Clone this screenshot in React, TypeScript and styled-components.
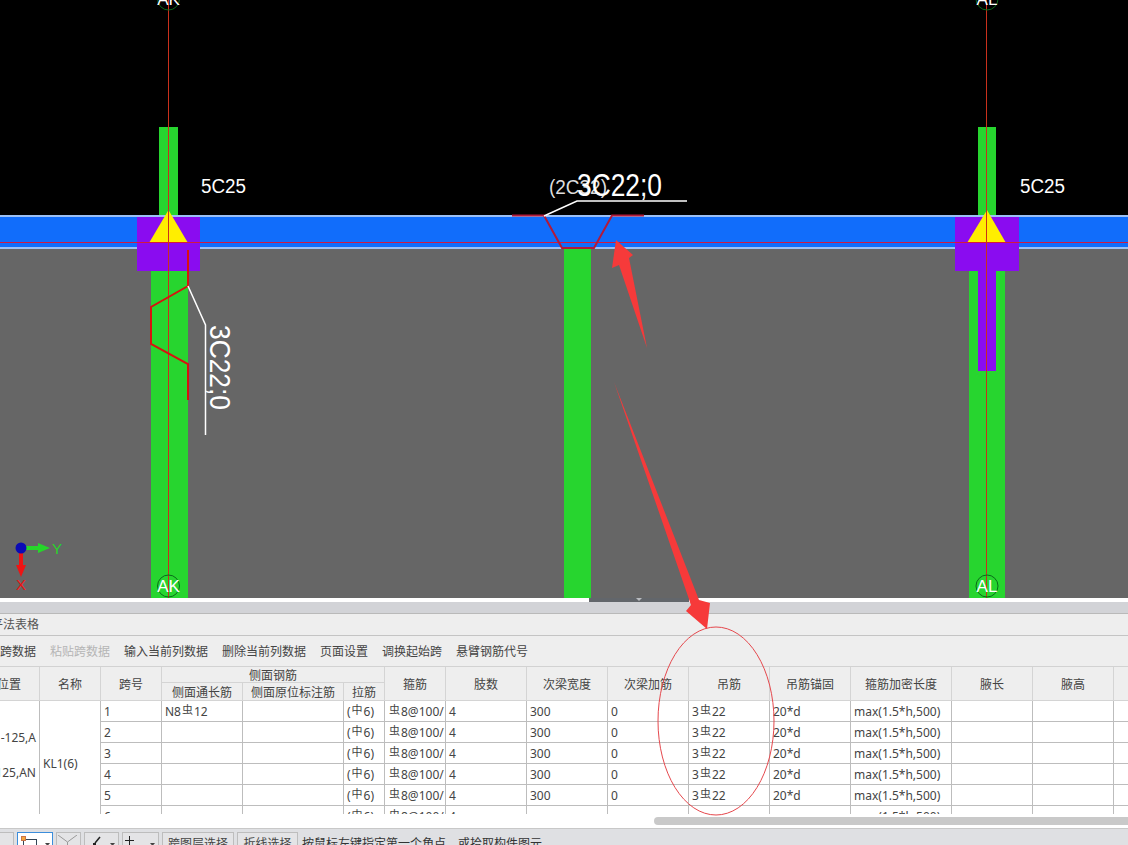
import * as React from 'react'
import styled, { createGlobalStyle } from 'styled-components'

const CJK = `"Noto Sans", "Noto Sans CJK SC", sans-serif`

const GlobalStyle = createGlobalStyle`
  html, body {
    margin: 0;
    height: 845px;
    overflow: hidden;
    background: #fff;
  }
  * {
    box-sizing: border-box;
  }
`

const Page = styled.div`
  position: relative;
  width: 1128px;
  height: 845px;
  overflow: hidden;
  display: flex;
  flex-direction: column;
  font-family: ${CJK};
  font-size: 12px;
  color: #444;
`

const Canvas = styled.svg`
  display: block;
  flex: none;
  width: 1128px;
  height: 598px;
`

const Splitter = styled.div`
  flex: none;
  height: 4px;
  background: #fff;
  display: flex;
  padding-left: 589px;
`

const SplitterHandle = styled.div`
  width: 100px;
  height: 4px;
  background: #62666b;
  display: flex;
  justify-content: center;
  &::after {
    content: '';
    height: 0;
    border-left: 3px solid transparent;
    border-right: 3px solid transparent;
    border-top: 3px solid #b9bcc0;
  }
`

const DockGap = styled.div`
  flex: none;
  height: 12px;
  background: #d2d3d7;
  border-bottom: 1px solid #b9b9b9;
`

const TitleBar = styled.div`
  flex: none;
  height: 22px;
  line-height: 21px;
  background: #eee;
  border-bottom: 1px solid #c4c4c4;
  margin-left: -9px;
  color: #555;
`

const Toolbar = styled.div`
  flex: none;
  height: 30px;
  background: #eee;
  margin-left: -24px;
  display: flex;
  align-items: center;
  gap: 14px;
`

const ToolItem = styled.span<{ $disabled?: boolean }>`
  color: ${(p) => (p.$disabled ? '#b5b5b5' : '#444')};
  white-space: nowrap;
`

const TableClip = styled.div`
  flex: none;
  height: 148px;
  overflow: hidden;
  background: #fff;
`

const Table = styled.div`
  display: grid;
  margin-left: -21px;
  width: max-content;
  grid-template-columns: 61px 61px 61px 81px 101px 41px 61px 81px 81px 81px 81px 81px 101px 81px 81px 81px;
  grid-template-rows: 16px 18px repeat(6, 21px);
  grid-auto-flow: row dense;
  border-top: 1px solid #d2d2d2;
`

const Head = styled.div<{ $rows?: number; $cols?: number }>`
  grid-row: span ${(p) => p.$rows || 1};
  grid-column: span ${(p) => p.$cols || 1};
  background: #eee;
  border-right: 1px solid #d4d4d4;
  border-bottom: 1px solid #d4d4d4;
  padding-top: 1px;
  display: flex;
  align-items: center;
  justify-content: center;
  white-space: nowrap;
  overflow: hidden;
`

const Cell = styled.div<{ $rows?: number }>`
  grid-row: span ${(p) => p.$rows || 1};
  border-right: 1px solid #bdbdbd;
  border-bottom: 1px solid ${(p) => (p.$rows ? 'transparent' : '#bdbdbd')};
  padding: 0 3px;
  display: flex;
  align-items: center;
  white-space: nowrap;
  overflow: hidden;
  color: #444;
`

const PositionCell = styled(Cell)`
  flex-direction: column;
  align-items: flex-end;
  justify-content: flex-start;
  gap: 18px;
  padding: 28px 3px 0 0;
`

const Rebar = styled.span`
  font-size: 11px;
  position: relative;
  top: -2px;
  margin: 0 1px;
  line-height: 1;
`

const ScrollTrack = styled.div`
  flex: none;
  height: 8px;
  margin-top: 3px;
  padding-left: 654px;
  background: #fff;
`

const ScrollThumb = styled.div`
  height: 8px;
  background: #c9c9c9;
  border-radius: 4px 0 0 4px;
`

const StatusBar = styled.div`
  flex: none;
  margin-top: 3px;
  height: 30px;
  background: #dfe0e3;
  border-top: 1px solid #c8c8c8;
  display: flex;
  align-items: flex-start;
  padding-top: 3px;
  gap: 3px;
  margin-left: -4px;
`

const StatusButton = styled.div<{ $active?: boolean; $w: number }>`
  width: ${(p) => p.$w}px;
  height: 24px;
  background: ${(p) => (p.$active ? '#fff' : '#e4e4e6')};
  border: 1px solid ${(p) => (p.$active ? '#3b8ddb' : '#bdbdbd')};
  flex: none;
  display: flex;
  align-items: flex-start;
  justify-content: center;
  padding-top: 1px;
  white-space: nowrap;
  color: #444;
`

const ButtonIcon = styled.svg`
  display: block;
  flex: none;
  margin-top: 1px;
`

const StatusHint = styled.span`
  padding-top: 2px;
  white-space: nowrap;
  margin-left: 1px;
  color: #333;
`

const Annotations = styled.svg`
  position: absolute;
  left: 0;
  top: 0;
  width: 1128px;
  height: 845px;
  pointer-events: none;
`

const canvasFont = '"Liberation Sans", "Noto Sans", sans-serif'

const AxisBubble = ({ x, y, label }: { x: number; y: number; label: string }) => (
  <g>
    <circle cx={x} cy={y} r={11} fill="none" stroke="#0a6b1a" strokeWidth={1} />
    <text x={x} y={y + 6} textAnchor="middle" fill="#fff" fontSize={17} fontFamily={canvasFont}>
      {label}
    </text>
  </g>
)

const Drawing = () => (
  <Canvas viewBox="0 0 1128 598">
    <rect width="1128" height="215" fill="#000" />
    <rect y="215" width="1128" height="383" fill="#666" />
    <rect x="159" y="127" width="19" height="90" fill="#27d52f" />
    <rect x="978" y="127" width="18" height="90" fill="#27d52f" />
    <rect y="215" width="1128" height="2" fill="#9cc0f5" />
    <rect y="217" width="1128" height="30" fill="#116dfb" />
    <rect y="247" width="1128" height="2" fill="#9cc0f5" />

    <rect x="151" y="271" width="37" height="327" fill="#27d52f" />
    <rect x="564" y="249" width="27" height="349" fill="#27d52f" />
    <rect x="969" y="271" width="36" height="327" fill="#27d52f" />
    <rect x="137" y="217" width="63" height="54" fill="#8a0cf0" />
    <rect x="955" y="217" width="64" height="54" fill="#8a0cf0" />
    <rect x="978" y="271" width="18" height="100" fill="#8a0cf0" />

    <polygon points="168.5,210 188,243 149,243" fill="#ffee00" />
    <polygon points="987,210 1006,243 967,243" fill="#ffee00" />

    <line x1="0" y1="242.5" x2="1128" y2="242.5" stroke="#d3193f" strokeWidth={1} />
    <line x1="168.5" y1="0" x2="168.5" y2="598" stroke="#c9301c" strokeWidth={1} />
    <line x1="986.5" y1="0" x2="986.5" y2="598" stroke="#c9301c" strokeWidth={1} />

    <polyline
      points="188,250 188,286 151,307 151,344 188,364 188,400"
      fill="none"
      stroke="#d8120f"
      strokeWidth={2}
    />
    <polyline points="188,286 205.5,325 205.5,435" fill="none" stroke="#fff" strokeWidth={1.5} />
    <text
      transform="translate(210 325) rotate(90)"
      fill="#fff"
      fontSize={30}
      fontFamily={canvasFont}
      textLength={85}
      lengthAdjust="spacingAndGlyphs"
    >
      3C22;0
    </text>

    <polyline
      points="512,215.5 544,215.5 562,248 594,248 612,215.5 644,215.5"
      fill="none"
      stroke="#b21a3a"
      strokeWidth={2}
    />
    <polyline points="544,216 577,201 687,201" fill="none" stroke="#fff" strokeWidth={1.5} />
    <text
      x="549"
      y="194"
      fill="#ddd"
      fontSize={20}
      fontFamily={canvasFont}
      textLength={58}
      lengthAdjust="spacingAndGlyphs"
    >
      (2C32)
    </text>
    <text
      x="577"
      y="196"
      fill="#fff"
      fontSize={31}
      fontFamily={canvasFont}
      textLength={85}
      lengthAdjust="spacingAndGlyphs"
    >
      3C22;0
    </text>

    <text x="201" y="193" fill="#fff" fontSize={20} fontFamily={canvasFont} textLength={45} lengthAdjust="spacingAndGlyphs">
      5C25
    </text>
    <text x="1020" y="193" fill="#fff" fontSize={20} fontFamily={canvasFont} textLength={45} lengthAdjust="spacingAndGlyphs">
      5C25
    </text>

    <AxisBubble x={168.5} y={-1} label="AK" />
    <AxisBubble x={987} y={-1} label="AL" />
    <AxisBubble x={168.5} y={586} label="AK" />
    <AxisBubble x={987} y={586} label="AL" />

    <rect x="26" y="546" width="14" height="4" fill="#26d62a" />
    <polygon points="38,543 50,548 38,553" fill="#26d62a" />
    <rect x="19" y="553" width="4" height="14" fill="#ee1414" />
    <polygon points="16,565 26,565 21,577" fill="#ee1414" />
    <circle cx="21" cy="548" r="5.5" fill="#0b0bb5" />
    <text x="52" y="554" fill="#26d62a" fontSize={15} fontFamily={canvasFont}>
      Y
    </text>
    <text x="16" y="590" fill="#ee1414" fontSize={15} fontFamily={canvasFont}>
      X
    </text>
  </Canvas>
)

const Steel = () => <Rebar>虫</Rebar>
const Tie = () => <Rebar>中</Rebar>

const spans = [1, 2, 3, 4, 5, 6]

const App = () => (
  <Page>
    <GlobalStyle />
    <Drawing />
    <Splitter>
      <SplitterHandle />
    </Splitter>
    <DockGap />
    <TitleBar>平法表格</TitleBar>
    <Toolbar>
      <ToolItem>复制跨数据</ToolItem>
      <ToolItem $disabled>粘贴跨数据</ToolItem>
      <ToolItem>输入当前列数据</ToolItem>
      <ToolItem>删除当前列数据</ToolItem>
      <ToolItem>页面设置</ToolItem>
      <ToolItem>调换起始跨</ToolItem>
      <ToolItem>悬臂钢筋代号</ToolItem>
    </Toolbar>
    <TableClip>
      <Table>
        <Head $rows={2}>位置</Head>
        <Head $rows={2}>名称</Head>
        <Head $rows={2}>跨号</Head>
        <Head $cols={3}>侧面钢筋</Head>
        <Head $rows={2}>箍筋</Head>
        <Head $rows={2}>肢数</Head>
        <Head $rows={2}>次梁宽度</Head>
        <Head $rows={2}>次梁加筋</Head>
        <Head $rows={2}>吊筋</Head>
        <Head $rows={2}>吊筋锚固</Head>
        <Head $rows={2}>箍筋加密长度</Head>
        <Head $rows={2}>腋长</Head>
        <Head $rows={2}>腋高</Head>
        <Head $rows={2} />
        <Head>侧面通长筋</Head>
        <Head>侧面原位标注筋</Head>
        <Head>拉筋</Head>

        <PositionCell $rows={6}>
          <span>&lt;1-125,A</span>
          <span>&lt;125,AN</span>
        </PositionCell>
        <Cell $rows={6}>KL1(6)</Cell>
        {spans.map((n) => (
          <React.Fragment key={n}>
            <Cell>{n}</Cell>
            <Cell>
              {n === 1 && (
                <>
                  N8
                  <Steel />
                  12
                </>
              )}
            </Cell>
            <Cell />
            <Cell>
              (<Tie />
              6)
            </Cell>
            <Cell>
              <Steel />
              8@100/
            </Cell>
            <Cell>4</Cell>
            <Cell>{n < 6 && '300'}</Cell>
            <Cell>{n < 6 && '0'}</Cell>
            <Cell>
              {n < 6 && (
                <>
                  3
                  <Steel />
                  22
                </>
              )}
            </Cell>
            <Cell>{n < 6 && '20*d'}</Cell>
            <Cell>max(1.5*h,500)</Cell>
            <Cell />
            <Cell />
            <Cell />
          </React.Fragment>
        ))}
      </Table>
    </TableClip>
    <ScrollTrack>
      <ScrollThumb />
    </ScrollTrack>
    <StatusBar>
      <StatusButton $w={18} />
      <StatusButton $w={36} $active>
        <ButtonIcon width="34" height="12" viewBox="0 0 34 12">
          <rect x="5.5" y="4.5" width="13" height="12" fill="none" stroke="#345" />
          <rect x="3.5" y="1.5" width="4" height="4" fill="#f3a63c" stroke="#c8744a" />
          <polygon points="27,8 32,8 29.5,11" fill="#444" />
        </ButtonIcon>
      </StatusButton>
      <StatusButton $w={25}>
        <ButtonIcon width="23" height="12" viewBox="0 0 23 12">
          <path d="M1 0 L10.5 7 L20 0 M10.5 7 V12" fill="none" stroke="#999" />
        </ButtonIcon>
      </StatusButton>
      <StatusButton $w={35}>
        <ButtonIcon width="33" height="12" viewBox="0 0 33 12">
          <path d="M15 2 L10 8" fill="none" stroke="#222" strokeWidth="1.5" />
          <rect x="8" y="8" width="3" height="3" fill="#222" />
          <polygon points="25,8 30,8 27.5,11" fill="#444" />
        </ButtonIcon>
      </StatusButton>
      <StatusButton $w={37}>
        <ButtonIcon width="35" height="12" viewBox="0 0 35 12">
          <path d="M6.5 1 V10 M2 5.5 H11" fill="none" stroke="#222" />
          <polygon points="27,8 32,8 29.5,11" fill="#444" />
        </ButtonIcon>
      </StatusButton>
      <StatusButton $w={72}>跨图层选择</StatusButton>
      <StatusButton $w={61}>折线选择</StatusButton>
      <StatusHint>按鼠标左键指定第一个角点，或拾取构件图元</StatusHint>
    </StatusBar>
    <Annotations viewBox="0 0 1128 845">
      <polygon points="616,240 633,255 629,258 647,348 619,265 612,268" fill="#f63a3a" />
      <polygon points="614,382 699,600 710,603 707,629 686,611 691,605" fill="#f63a3a" />
      <ellipse cx="716" cy="721" rx="58" ry="94" fill="none" stroke="#e5484d" strokeWidth={1} />
    </Annotations>
  </Page>
)

export default App
